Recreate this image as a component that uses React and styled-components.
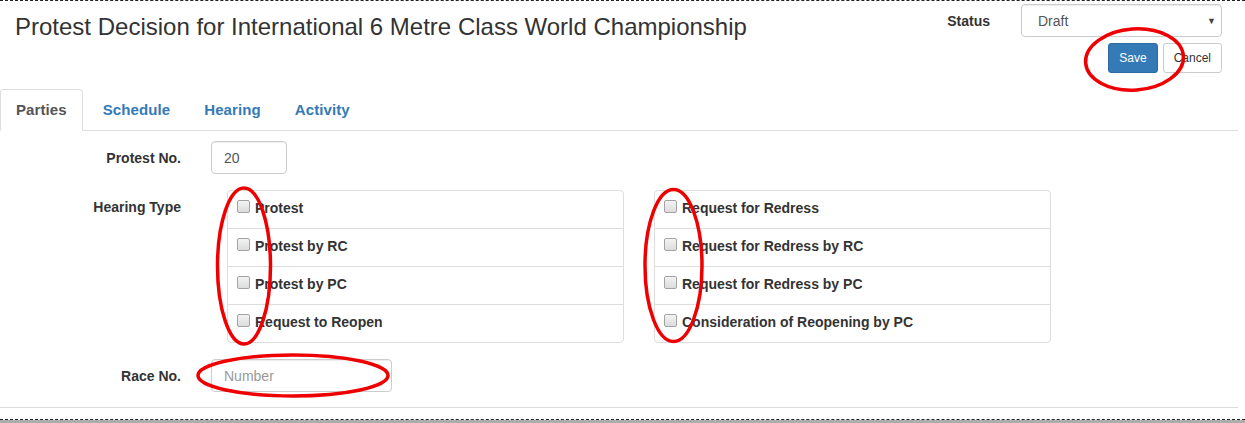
import styled, { createGlobalStyle } from "styled-components";

const GlobalStyle = createGlobalStyle`
  html, body {
    margin: 0;
    background: #adadad;
  }
  body {
    font-family: "Liberation Sans", Arial, sans-serif;
    font-size: 14px;
    color: #333;
  }
`;

const Dialog = styled.div`
  position: relative;
  box-sizing: border-box;
  width: 1245px;
  height: 420px;
  background: #fff;
  border-top: 1px dashed #222;
  border-bottom: 1px dashed #222;
`;

const Inner = styled.div`
  width: 1238px;
`;

const Header = styled.header`
  display: flex;
  justify-content: space-between;
  align-items: flex-start;
  height: 88px;
  padding: 0 16px 0 15px;
  box-sizing: border-box;
`;

const Title = styled.h3`
  margin: 13px 0 0;
  font-size: 24px;
  font-weight: 400;
  line-height: 1.1;
  color: #333;
`;

const HeaderSide = styled.div`
  display: flex;
  flex-direction: column;
  align-items: flex-end;
  gap: 6px;
  padding-top: 3px;
`;

const StatusRow = styled.div`
  display: flex;
  align-items: center;
  gap: 31px;
`;

const Label = styled.label`
  font-weight: 700;
  font-size: 14px;
  line-height: 20px;
  color: #333;
`;

const Select = styled.div`
  display: flex;
  align-items: center;
  justify-content: space-between;
  box-sizing: border-box;
  width: 201px;
  height: 33px;
  padding: 0 5px 0 16px;
  border: 1px solid #ccc;
  border-radius: 4px;
  box-shadow: inset 0 1px 1px rgba(0, 0, 0, 0.075);
  color: #555;
  font-size: 14px;
`;

const Caret = styled.span`
  font-size: 9px;
  color: #444;
`;

const Buttons = styled.div`
  display: flex;
  gap: 5px;
`;

const Button = styled.button`
  box-sizing: border-box;
  height: 30px;
  padding: 5px 10px;
  font-family: inherit;
  font-size: 12px;
  line-height: 18px;
  border-radius: 3px;
  border: 1px solid ${({ $primary }) => ($primary ? "#2e6da4" : "#ccc")};
  background: ${({ $primary }) => ($primary ? "#337ab7" : "#fff")};
  color: ${({ $primary }) => ($primary ? "#fff" : "#333")};
`;

const Tabs = styled.ul`
  display: flex;
  margin: 0;
  padding: 0;
  list-style: none;
  border-bottom: 1px solid #ddd;
`;

const Tab = styled.li`
  margin: 0 2px -1px 0;
  padding: 10px 15px;
  line-height: 20px;
  font-size: 15px;
  font-weight: 700;
  letter-spacing: 0.1px;
  border: 1px solid transparent;
  border-radius: 4px 4px 0 0;
  color: #337ab7;
  ${({ $active }) =>
    $active &&
    `
    margin-right: 4px;
    color: #555;
    background: #fff;
    border-color: #ddd #ddd transparent;
  `}
`;

const Form = styled.form`
  display: flex;
  flex-direction: column;
  gap: 16px;
  padding: 10px 0 15px;
  border-bottom: 1px solid #ddd;
`;

const Row = styled.div`
  display: grid;
  grid-template-columns: 196px 1fr;
  column-gap: 15px;
  align-items: start;
`;

const RowLabel = styled(Label)`
  padding: 7px 15px 0 0;
  text-align: right;
`;

const Input = styled.input`
  box-sizing: border-box;
  width: ${({ $w }) => $w}px;
  height: 33px;
  padding: 6px 12px;
  border: 1px solid #ccc;
  border-radius: 4px;
  box-shadow: inset 0 1px 1px rgba(0, 0, 0, 0.075);
  font-family: inherit;
  font-size: 14px;
  color: #555;
  &::placeholder {
    color: #999;
  }
`;

const Lists = styled.div`
  display: grid;
  grid-template-columns: 397px 397px;
  gap: 30px;
  margin-left: 16px;
`;

const List = styled.div`
  border: 1px solid #ddd;
  border-radius: 4px;
`;

const Item = styled.label`
  display: flex;
  align-items: center;
  height: 34px;
  padding: 0 0 3px 9px;
  font-weight: 700;
  font-size: 14px;
  color: #333;
  & + & {
    border-top: 1px solid #ddd;
  }
`;

const Check = styled.input`
  appearance: none;
  box-sizing: border-box;
  width: 13px;
  height: 13px;
  margin: -3px 5px 0 0;
  border: 1px solid #a3a3a3;
  border-radius: 2px;
  background: linear-gradient(#f3f3f3, #dcdcdc);
`;

const Marks = styled.svg`
  position: absolute;
  top: -1px;
  left: 0;
  pointer-events: none;
`;

const left = ["Protest", "Protest by RC", "Protest by PC", "Request to Reopen"];
const right = [
  "Request for Redress",
  "Request for Redress by RC",
  "Request for Redress by PC",
  "Consideration of Reopening by PC",
];

function CheckList({ items }) {
  return (
    <List>
      {items.map((t) => (
        <Item key={t}>
          <Check type="checkbox" />
          {t}
        </Item>
      ))}
    </List>
  );
}

export default function App() {
  return (
    <>
      <GlobalStyle />
      <Dialog>
        <Inner>
          <Header>
            <Title>Protest Decision for International 6 Metre Class World Championship</Title>
            <HeaderSide>
              <StatusRow>
                <Label>Status</Label>
                <Select>
                  Draft
                  <Caret>▼</Caret>
                </Select>
              </StatusRow>
              <Buttons>
                <Button $primary>Save</Button>
                <Button>Cancel</Button>
              </Buttons>
            </HeaderSide>
          </Header>
          <Tabs>
            <Tab $active>Parties</Tab>
            <Tab>Schedule</Tab>
            <Tab>Hearing</Tab>
            <Tab>Activity</Tab>
          </Tabs>
          <Form>
            <Row>
              <RowLabel>Protest No.</RowLabel>
              <Input $w={76} defaultValue="20" />
            </Row>
            <Row>
              <RowLabel>Hearing Type</RowLabel>
              <Lists>
                <CheckList items={left} />
                <CheckList items={right} />
              </Lists>
            </Row>
            <Row>
              <RowLabel>Race No.</RowLabel>
              <Input $w={181} placeholder="Number" />
            </Row>
          </Form>
        </Inner>
        <Marks width="1245" height="423">
          <g fill="none" stroke="#ee0000" strokeWidth="3.5">
            <ellipse cx="1134.5" cy="59.5" rx="49" ry="30.5" transform="rotate(-4 1134.5 59.5)" />
            <ellipse cx="244" cy="266" rx="26.5" ry="78" />
            <ellipse cx="673.5" cy="265.5" rx="28.5" ry="76" />
            <ellipse cx="293" cy="375.5" rx="95" ry="20.5" />
          </g>
        </Marks>
      </Dialog>
    </>
  );
}
